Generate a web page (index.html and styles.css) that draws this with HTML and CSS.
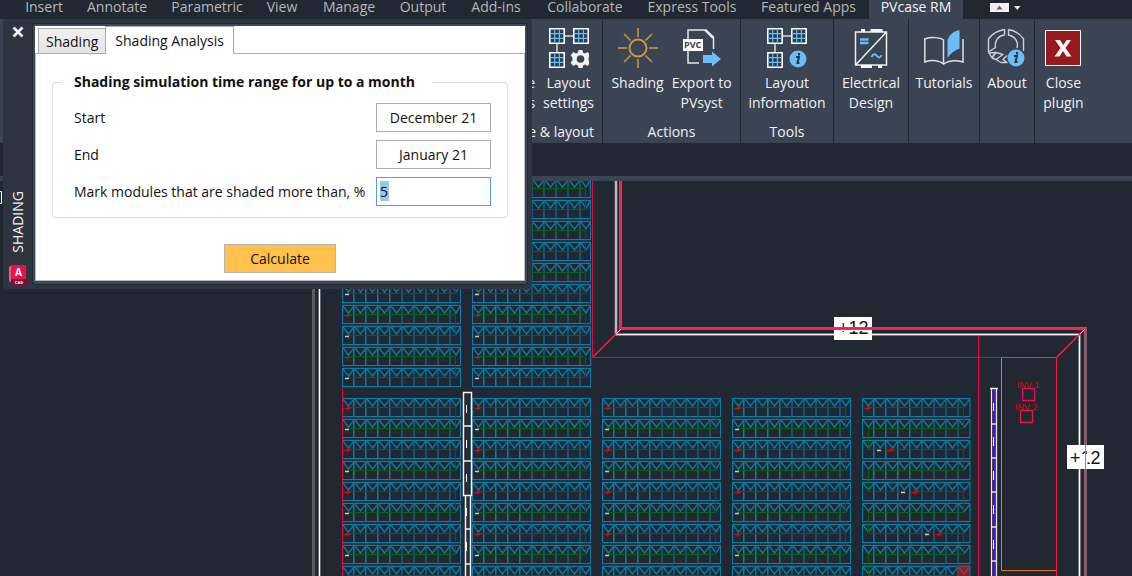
FILE: index.html
```html
<!DOCTYPE html>
<html lang="en">
<head>
<meta charset="utf-8">
<title>PVcase RM</title>
<link rel="stylesheet" href="styles.css">
</head>
<body>
<div class="app">
  <nav class="tabs">
    <button class="tab">Insert</button>
    <button class="tab">Annotate</button>
    <button class="tab">Parametric</button>
    <button class="tab">View</button>
    <button class="tab">Manage</button>
    <button class="tab">Output</button>
    <button class="tab">Add-ins</button>
    <button class="tab">Collaborate</button>
    <button class="tab">Express Tools</button>
    <button class="tab">Featured Apps</button>
    <button class="tab active">PVcase RM</button>
    <button class="ribbon-toggle" aria-label="Minimize ribbon">
      <svg width="32" height="14" viewBox="0 0 32 14"><path d="M0 3h19v9H0z" fill="#f0f0f0"/><path d="M6.500 9.500l3-4 3 4z" fill="#666"/><path d="M24 6h6.500l-3.200 4z" fill="#e4e4e4"/></svg>
    </button>
  </nav>

  <div class="ribbon">
    <section class="panel panel-layout">
      <div class="tools">
        <button class="tool tool-cut"><span class="icon"></span>e<br>s</button>
        <button class="tool">
          <svg class="icon" viewBox="0 0 40 40"><use href="#tables"/><g transform="translate(31.500 31)" fill="#f2f2f2"><path fill-rule="evenodd" d="M-2-9h4l.6 2.700 2 .9 2.600-1.600 2.700 3.500-1.900 2 .2 1.500-.2 1.500 1.900 2-2.700 3.500-2.600-1.500-2 .9L2 9h-4l-.6-2.600-2-.9-2.600 1.500-2.700-3.500 1.900-2L-8.200 0-8-1.500l-1.900-2L-7.200-7l2.600 1.600 2-.9zM0-3.800A3.800 3.800 0 1 0 0 3.800 3.800 3.800 0 1 0 0-3.800z"/></g></svg>
          Layout<br>settings
        </button>
      </div>
      <h2 class="panel-title">e &amp; layout</h2>
    </section>
    <section class="panel panel-actions">
      <div class="tools">
        <button class="tool">
          <svg class="icon" viewBox="0 0 40 40"><circle cx="20" cy="20" r="8.500" fill="none" stroke="#c9983f" stroke-width="2"/><g stroke="#a58548" stroke-width="2"><path d="M20 0v9M20 31v9M0 20h9M31 20h9"/><path d="M6 6l6.500 6.500M27.500 27.500L34 34M6 34l6.500-6.500M27.500 12.500L34 6" stroke-width="1.500" stroke="#c9983f"/></g></svg>
          Shading
        </button>
        <button class="tool">
          <svg class="icon" viewBox="0 0 40 40"><path d="M6 11V2h18l7.500 7v12M6 23v12h11" fill="none" stroke="#e8e8e8" stroke-width="1.500"/><path d="M23 2l8 8" stroke="#e8e8e8" stroke-width="2"/><path d="M1 11h20v12H1z" fill="#fff"/><text x="2" y="20" class="pvc">PVC</text><path d="M21 27h9v-3.500l9 7.500-9 7.500V35h-9z" fill="#6bbcf8"/></svg>
          Export to<br>PVsyst
        </button>
      </div>
      <h2 class="panel-title">Actions</h2>
    </section>
    <section class="panel panel-tools">
      <div class="tools">
        <button class="tool">
          <svg class="icon" viewBox="0 0 40 40"><use href="#tables"/><use href="#info" x="31" y="31"/></svg>
          Layout<br>information
        </button>
      </div>
      <h2 class="panel-title">Tools</h2>
    </section>
    <section class="panel panel-electrical">
      <div class="tools">
        <button class="tool">
          <svg class="icon" viewBox="0 0 40 40"><path d="M4.500 4h31v33h-31zM5 36.500L35 4.500" fill="none" stroke="#eee" stroke-width="1.500"/><path d="M10 1h4v3h-4zM19.500 1h12v3h-12zM10 37h11v3H10zM27 37h4v3h-4z" fill="#f4f4f4"/><path d="M9 11.500h8.500M9 15h8.500" stroke="#6bbcf8" stroke-width="2.500"/><path d="M20.500 29c2-4 4-3 5.500-1s3.500 2 4.500-1" fill="none" stroke="#6bbcf8" stroke-width="2"/></svg>
          Electrical<br>Design
        </button>
      </div>
    </section>
    <section class="panel panel-tutorials">
      <div class="tools">
        <button class="tool">
          <svg class="icon" viewBox="0 0 40 40"><path d="M.8 10v24c6-2 13-2 18.700 2V12C16 9 6 9 .8 11M19.500 36c6-4 13-4 19.500-2V11" fill="none" stroke="#dde0e4" stroke-width="1.500"/><path d="M23.500 12C26 6 30 3 35.500 2v18.500C31 22 27 25 23.500 30z" fill="#6bbcf8"/></svg>
          Tutorials
        </button>
      </div>
    </section>
    <section class="panel panel-about">
      <div class="tools">
        <button class="tool">
          <svg class="icon" viewBox="0 0 40 40"><g fill="none" stroke="#cdd0d5" stroke-width="1.400" stroke-linejoin="round"><path d="M17.500 1.500C11 2.500 5.500 5.500 1.500 11v13l7-4.500C7.500 14 10 8 17.500 7zM21.500 1.500C28 2.500 33 6 36.500 11v12M21.500 1.500V7c7 1.500 10 7 8.500 13"/><path d="M2 25l3 5 3.500-5.500zM5 30l4 1.500 7-5-7-2zM9 31.500l5 3h6l-4-3 4-4"/></g><use href="#info" x="29" y="30"/></svg>
          About
        </button>
      </div>
    </section>
    <section class="panel panel-close">
      <div class="tools">
        <button class="tool">
          <svg class="icon" viewBox="0 0 40 40"><path d="M2.500 2.500h35v35h-35z" fill="#961a1d" stroke="#fff"/><path d="M12 12h5l3.300 5 3.300-5H28l-5.500 8 6 8.500h-5L20 23l-3.500 5.500h-5l6-8.500z" fill="#f4f4f4"/></svg>
          Close<br>plugin
        </button>
      </div>
    </section>
  </div>
  <div class="ribbon-gap"></div>

  <main class="drawing">
    <svg class="plan" viewBox="0 181 1132 395" preserveAspectRatio="xMinYMin slice">
      <defs>
        <g id="cell"><path d="M0 .5h12M0 18.500h12M12 0v19" stroke="#067fac"/><path d="M1 1l5.500 7L12 1" stroke="#08799f" stroke-width="1.400"/></g>
        <g id="row9" fill="none">
          <path d="M0 9.500h108" stroke="#1d3442" stroke-width="21"/><path d="M0 9.500h108" stroke="#212831" stroke-width="17"/>
          <path d="M.5 0v19M11.500 0v19M23.500 0v19M35.500 0v19M47.500 4v15" stroke="#067fac"/>
          <use href="#cell"/><use href="#cell" x="12"/><use href="#cell" x="24"/><use href="#cell" x="36"/><use href="#cell" x="48"/><use href="#cell" x="60"/><use href="#cell" x="72"/><use href="#cell" x="84"/><use href="#cell" x="96"/>
        </g>
        <g id="row10" fill="none"><path d="M107 9.500h12" stroke="#1d3442" stroke-width="21"/><path d="M107 9.500h12" stroke="#212831" stroke-width="17"/><use href="#row9"/><path d="M108 .5h11M108 18.500h11M118.500 0v19" stroke="#067fac"/><path d="M109 1l5 7 4.500-7" stroke="#08799f" stroke-width="1.400"/></g>
        <g id="plus"><path d="M-3 .5h6" stroke="#f00" stroke-width="1.300"/><path d="M0-2v5" stroke="#c10c0c" stroke-width=".8"/></g>
        <path id="minus" d="M-2 .5h4" stroke="#c8c8c8" stroke-width="1.500"/>
        <g id="pair"><use href="#row10"/><use href="#row10" y="21"/><path d="M5 9.500h108.500v21H5" fill="none" stroke="#066206"/><use href="#plus" x="5.500" y="10"/><use href="#minus" x="5" y="31"/></g>
        <g id="block"><use href="#pair"/><use href="#pair" y="42"/><use href="#pair" y="84"/><use href="#pair" y="126"/><use href="#pair" y="168"/></g>
        <g id="tables"><path d="M16 8h9M8 16v9" stroke="#d8dadd" stroke-width="1.500"/><g id="mini"><path d="M.8.8h14.400v14.400H.8z" fill="#253d52" stroke="#fff" stroke-width="1.600"/><path d="M1.600 5.700h12.800M1.600 10.400h12.800M5.700 1.600v12.800M10.400 1.600v12.800" stroke="#6bbcf8" stroke-width="1.200"/></g><use href="#mini" x="24"/><use href="#mini" y="24"/></g>
        <g id="info"><circle r="8.500" fill="#6bbcf8"/><path d="M-2-2h3l-1.500 6h2M1-6v2.500" fill="none" stroke="#24384c" stroke-width="2"/></g>
      </defs>

      <path d="M0 191.500h1.500v12H0" fill="none" stroke="#fff"/>
      <g fill="none">
        <path d="M313.500 181v395" stroke="#5d5f68" stroke-width="3"/><path d="M313.500 181v395" stroke="#d51b4c"/>
        <path d="M319.500 181v395" stroke="#65696e" stroke-width="3"/><path d="M319.500 181v395" stroke="#fff"/>
      </g>
      <path d="M342.500 288v99" stroke="#a00c34"/>

      <use href="#pair" x="342" y="263"/><use href="#pair" x="342" y="305"/><use href="#pair" x="342" y="347"/>
      <use href="#pair" x="472" y="179"/><use href="#pair" x="472" y="221"/><use href="#pair" x="472" y="263"/><use href="#pair" x="472" y="305"/><use href="#pair" x="472" y="347"/>
      <use href="#block" x="342" y="398"/><use href="#block" x="472" y="398"/><use href="#block" x="602" y="398"/><use href="#block" x="732" y="398"/>
      <g>
        <use href="#row9" x="862" y="398"/><use href="#row9" x="862" y="419"/><use href="#row9" x="862" y="440"/><use href="#row9" x="862" y="461"/><use href="#row9" x="862" y="482"/><use href="#row9" x="862" y="503"/><use href="#row9" x="862" y="524"/><use href="#row9" x="862" y="545"/><use href="#row9" x="862" y="566"/>
        <path d="M867 407.500h96.500v21h-95v21H880M891 449.500h72.500v21h-95v21H904M915 491.500h48.500v21h-95v21H928M939 533.500h24.500v21h-95v21H952" fill="none" stroke="#066206"/>
        <use href="#plus" x="867.500" y="408"/><use href="#minus" x="879" y="450"/><use href="#plus" x="890.500" y="450"/><use href="#minus" x="903" y="492"/><use href="#plus" x="914.500" y="492"/><use href="#minus" x="927" y="534"/><use href="#plus" x="938.500" y="534"/>
        <path d="M957 565h13v11h-13z" fill="#a5242a" opacity=".65"/><path d="M959 568l4.500 6 4.500-6" fill="none" stroke="#ce2731"/>
      </g>

      <g fill="none" stroke="#e5053c">
        <path d="M342.500 387v189M592.500 181v176.500h464.500M978.500 335v241"/>
        <path d="M1001.500 358v212.500h55" stroke="#e57913"/><path d="M1001.500 357.500h55" stroke="#ed381c"/><path d="M1056.500 358v218" stroke="#f41536"/>
      </g>
      <g fill="none">
        <path d="M616 181v153.500h463.500V576" stroke="#70757b" stroke-width="3"/><path d="M616 181v153.500h463.500V576" stroke="#fff"/>
        <path d="M834 317h38v23h-38z" fill="#fff"/>
      </g>
      <text x="838" y="334" class="offset">+12</text>
      <path d="M842 330.500h22" stroke="#fff"/>
      <path d="M620.500 181v147.500h465V576" fill="none" stroke="#8c6270" stroke-width="3"/>
      <path d="M620.500 181v147.500h465" fill="none" stroke="#f51c50" stroke-width="1.500"/>
      <path d="M1085.500 329v247" stroke="#df2955"/>
      <path d="M1067 445h37v24h-37z" fill="#fff"/>
      <text x="1070" y="464" class="offset">+12</text>
      <path d="M1084.500 454v11" stroke="#fff" stroke-width="6"/><path d="M1085.500 445v24" stroke="#f65b7d"/>
      <path d="M593 357l28-28M1057 357l28-28" stroke="#f51c50" stroke-width="1.500"/><path d="M616 334l5-5M1080 334l5-5" stroke="#d8d8d8"/>

      <g fill="none">
        <path d="M463 392h9v104h-9z" fill="#222831"/><path d="M465 496h6v80h-6z" fill="#222831"/>
        <path d="M467.500 393v183" stroke="#4911ab"/>
        <path d="M463.500 392.500h8v103h-8zM463 426h9M463 461h9M465.500 496v80M470.500 496v80M465 529h6M465 564h6" stroke="#f2f2f2" stroke-width="1.500"/>
        <path d="M466.500 405v8M466.500 440v8M466.500 474v8M466.500 508v8M466.500 542v9" stroke="#fff"/>
        <path d="M994.500 389v187" stroke="#5a0ff0" stroke-width="2"/>
        <path d="M991.500 388v188M996.500 388v188M990 388.500h8M991 424h6M991 458h6M991 492h6M991 527h6M991 561h6" stroke="#e6e6e6" stroke-width="1.300"/>
        <path d="M993.500 403v8M993.500 437v9M993.500 471v9M993.500 505v9M993.500 540v9" stroke="#fff"/>
      </g>
      <g fill="none" stroke-width="1.300"><path d="M1022.500 388.500h12v12h-12z" stroke="#ef0457"/><path d="M1020.500 410.500h12v12h-12z" stroke="#ed163c"/></g>
      <text x="1017" y="388" class="inv">INV 1</text><text x="1015" y="410" class="inv">INV 2</text>
    </svg>
  </main>

  <aside class="palette">
    <div class="palette-bar">
      <button class="palette-close" aria-label="Close"><svg width="12" height="12" viewBox="0 0 12 12"><path d="M1.500 1.500l9 9M10.500 1.500l-9 9" stroke="#f4f4f4" stroke-width="2.800"/></svg></button>
      <span class="palette-name">SHADING</span>
      <svg width="18" height="20" viewBox="0 0 18 20"><path d="M0 2l3-2v18l-3-2z" fill="#f05a83"/><path d="M2 0h15v15H2z" fill="#e5124f"/><path d="M2 14h16v6H2z" fill="#7c0a2b"/><text x="9.500" y="11" class="logo-a">A</text><text x="10" y="18.500" class="logo-cad">CAD</text></svg>
    </div>
    <div class="palette-body">
      <div class="page-tabs">
        <button class="page-tab">Shading</button>
        <button class="page-tab current">Shading Analysis</button>
      </div>
      <form class="page">
        <fieldset class="group">
          <legend>Shading simulation time range for up to a month</legend>
          <div class="fields">
            <label for="start">Start</label><input id="start" class="date" type="text" value="December 21">
            <label for="end">End</label><input id="end" class="date" type="text" value="January 21">
            <label for="limit">Mark modules that are shaded more than, %</label><input id="limit" class="limit" type="text" value="5">
          </div>
        </fieldset>
        <button class="calculate" type="button">Calculate</button>
      </form>
    </div>
  </aside>
</div>
</body>
</html>
```
FILE: styles.css
```css
* { box-sizing: border-box; }

body {
  margin: 0;
  background: #222831;
  color: #f0f1f3;
  font: 14px/20px "Open Sans", "Noto Sans", sans-serif;
}

button, input {
  font: inherit;
  color: inherit;
}

button {
  border: 0;
  padding: 0;
  background: none;
}

.app {
  position: relative;
  display: flex;
  flex-direction: column;
  min-height: 100vh;
  overflow: hidden;
}

.tabs {
  display: grid;
  grid-template-columns: 60px 86px 94px 56px 78px 70px 76px 102px 112px 121px 94px auto;
  justify-content: start;
  height: 19px;
  padding-left: 14px;
}

.tab {
  height: 19px;
  padding-bottom: 5px;
  line-height: 14px;
  color: #b4b7bb;
  white-space: nowrap;
}

.tab.active {
  background: #3b4453;
  color: #f4f4f4;
}

.ribbon-toggle {
  display: flex;
  padding-left: 27px;
}

.ribbon {
  display: flex;
  height: 124px;
  background: #3b4453;
}

.panel {
  display: flex;
  flex-direction: column;
  justify-content: space-between;
  flex: none;
  padding: 9px 0 1px;
  border-right: 1px solid #222831;
}

.panel-layout { width: 603px; align-items: flex-end; padding-right: 8px; }
.panel-actions { width: 138px; }
.panel-tools { width: 93px; }
.panel-electrical { width: 75px; }
.panel-tutorials { width: 71px; }
.panel-about { width: 55px; }
.panel-close { width: 57px; border-right: 0; }

.tools {
  display: flex;
  justify-content: center;
  align-items: flex-start;
  gap: 8px;
}

.tool { white-space: nowrap; }

.icon {
  display: block;
  width: 40px;
  height: 40px;
  margin: 0 auto 5px;
}

.tool-cut {
  width: 8px;
  text-align: right;
}

.tool-cut .icon { width: 8px; }

.panel-title {
  margin: 0;
  font-size: 14px;
  line-height: 20px;
  font-weight: 400;
  text-align: center;
}

.pvc { font: 700 9px "Open Sans", sans-serif; fill: #35405a; }

.ribbon-gap {
  height: 38px;
  border-bottom: 5px solid #3b4453;
}

.drawing {
  flex: 1;
  min-height: 0;
}

.plan {
  display: block;
  width: 100%;
}

.offset { font: 18px "Liberation Sans", sans-serif; fill: #111; }
.inv { font: 9px "Liberation Sans", sans-serif; fill: #dc0a12; }

.palette {
  position: absolute;
  left: 3px;
  top: 19px;
  display: flex;
  width: 529px;
  padding: 4px 4px 4px 0;
  border-radius: 4px;
  background: #2e3440;
}

.palette-bar {
  display: flex;
  flex-direction: column;
  align-items: center;
  width: 29px;
  padding-top: 3px;
}

.palette-close { display: flex; }

.palette-name {
  margin: auto 0 12px;
  writing-mode: vertical-rl;
  transform: rotate(180deg);
  line-height: 20px;
}

.logo-a { font: 700 10px "Open Sans", sans-serif; fill: #fff; text-anchor: middle; }
.logo-cad { font: 700 4px "Open Sans", sans-serif; fill: #fff; text-anchor: middle; }

.palette-body {
  flex: 1;
  padding: 2px 2px 3px;
  border: 1px solid #232933;
  border-radius: 3px;
  background: linear-gradient(#fff, #fff) content-box, #3e4756;
  color: #111;
}

.page-tabs {
  display: flex;
  align-items: flex-end;
  height: 28px;
  padding-left: 3px;
  border-bottom: 1px solid #acacac;
}

.page-tab {
  height: 25px;
  padding: 1px 7px 0;
  border: 1px solid #acacac;
  border-bottom: 0;
  background: linear-gradient(#f0f0f0, #e5e5e5);
}

.page-tab.current {
  height: 28px;
  margin: 0 0 -1px -1px;
  padding: 0 9px;
  background: #fff;
}

.page {
  display: flex;
  flex-direction: column;
  align-items: center;
  padding: 18px 16px 7px;
  border: 1px solid #b8b8b8;
  border-top: 0;
}

.group {
  width: 100%;
  margin: 0 0 26px;
  padding: 11px 16px 11px 9px;
  border: 1px solid #d5dde5;
  border-radius: 4px;
}

.group legend {
  padding: 0 17px 0 12px;
  font-weight: 700;
}

.fields {
  display: grid;
  grid-template-columns: 1fr 115px;
  row-gap: 8px;
  align-items: center;
  padding-left: 12px;
  white-space: nowrap;
}

.fields input {
  width: 100%;
  height: 29px;
  padding: 0 3px;
  border: 1px solid #ababb3;
  background: #fff;
  outline: 0;
}

.fields .date { text-align: center; }

.fields .limit {
  border-color: #569de5;
  background: linear-gradient(#99c9f0, #99c9f0) 3px 3px / 9px 20px no-repeat #fff;
}

.calculate {
  width: 112px;
  height: 29px;
  border: 1px solid #b5b5b5;
  background: #ffc04c;
}
```
